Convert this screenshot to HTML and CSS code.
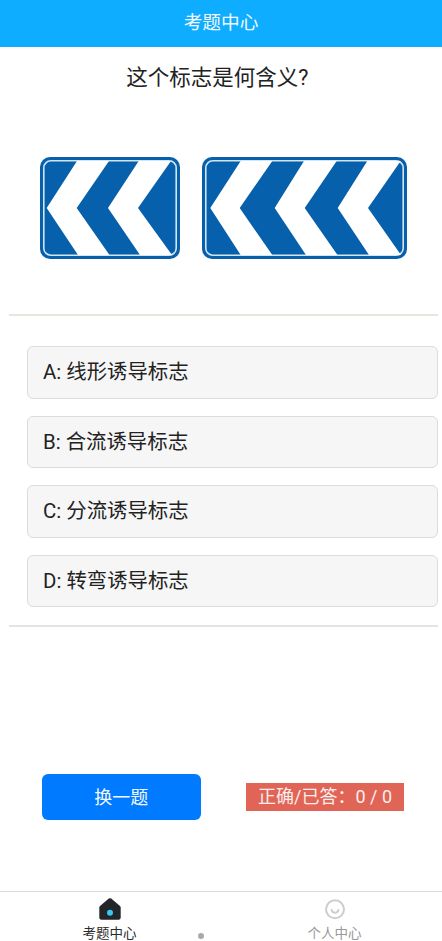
FILE: index.html
```html
<!DOCTYPE html>
<html lang="zh-CN">
  <head>
    <meta charset="UTF-8" />
    <meta name="viewport" content="width=device-width, initial-scale=1.0" />
    <title>考题中心</title>
    <link rel="stylesheet" href="styles.css">
  </head>
  <body>
    <header class="top-bar">考题中心</header>

    <main class="container">
      <!-- Question -->
      <h1 class="question">这个标志是何含义?</h1>
      <div class="signs">
        <svg class="sign" width="140" height="102" viewBox="0 0 140 102">
          <rect width="140" height="102" rx="10" fill="#0660ac" />
          <rect x="3.8" y="3.8" width="132.4" height="94.4" rx="7" fill="#0660ac" stroke="#d3e4f2" stroke-width="1.6" />
          <polygon fill="#fff" points="37,4 69,4 36.7,51 69.5,98 38,98 6.7,51" />
          <polygon fill="#fff" points="98.7,4 131,4 98,51 132,98 100,98 68,51" />
        </svg>
        <svg class="sign" width="205" height="102" viewBox="0 0 205 102">
          <rect width="205" height="102" rx="10" fill="#0660ac" />
          <rect x="3.8" y="3.8" width="197.4" height="94.4" rx="7" fill="#0660ac" stroke="#d3e4f2" stroke-width="1.6" />
          <polygon fill="#fff" points="38.7,4 70.3,4 37.7,51 70.3,98 38.7,98 8.3,51" />
          <polygon fill="#fff" points="102,4 134.7,4 102.7,51 135.5,98 104,98 72.7,51" />
          <polygon fill="#fff" points="165.3,4 198.7,4 166,51 199,98 167,98 135.7,51" />
        </svg>
      </div>

      <hr class="line line-warm" />

      <!-- Options -->
      <ul class="options">
        <li class="option">A: 线形诱导标志</li>
        <li class="option">B: 合流诱导标志</li>
        <li class="option">C: 分流诱导标志</li>
        <li class="option">D: 转弯诱导标志</li>
      </ul>

      <hr class="line" />

      <div class="actions">
        <button class="next-button">换一题</button>
        <div class="score">正确/已答：0 / 0</div>
      </div>
    </main>

    <footer class="tabs">
      <div class="tab tab-left">
        <svg width="24" height="24" viewBox="0 0 24 24">
          <path fill="#22252a" d="M10.8 1.6 Q12 0.7 13.2 1.6 L22 9 Q22.7 9.6 22.7 10.5 V20.5 Q22.7 22.7 20.5 22.7 H3.5 Q1.3 22.7 1.3 20.5 V10.5 Q1.3 9.6 2 9 Z" />
          <circle cx="12" cy="15.7" r="3" fill="#35c8f0" />
        </svg>
        <span>考题中心</span>
      </div>
      <div class="tab tab-right">
        <svg width="24" height="24" viewBox="0 0 24 24">
          <circle cx="12" cy="12.3" r="9" fill="none" stroke="#cdcdcd" stroke-width="2" />
          <path d="M8.6 13 A3.5 3.5 0 0 0 15.4 13" fill="none" stroke="#cdcdcd" stroke-width="2" stroke-linecap="round" />
        </svg>
        <span>个人中心</span>
      </div>
      <i class="dot"></i>
    </footer>
  </body>
</html>
```

FILE: styles.css
```css
* {
  box-sizing: border-box;
}
body {
  font-family: Roboto, "Noto Sans CJK SC", sans-serif;
  margin: 0;
  padding: 0;
  height: 941px;
  display: flex;
  flex-direction: column;
  background-color: #fff;
  overflow: hidden;
}
.top-bar {
  height: 47px;
  line-height: 46px;
  background: #0fadff;
  color: #f2f9ff;
  font-size: 18.7px;
  text-align: center;
  flex-shrink: 0;
}
.container {
  flex: 1;
  padding: 0 4.5px 0 9px;
}
.question {
  margin: 15px 0 0;
  padding-right: 12px;
  height: 31px;
  line-height: 31px;
  font-size: 21.5px;
  font-weight: 400;
  color: #222;
  text-align: center;
}
.signs {
  display: flex;
  gap: 21.5px;
  margin: 63.5px 0 0 31px;
}
.sign {
  display: block;
  flex-shrink: 0;
  filter: blur(0.4px);
}
.line {
  height: 2px;
  margin: 0;
  border: none;
  background: #e4e4e2;
}
.line-warm {
  margin-top: 55.5px;
  background: #e9e7dc;
}
.options {
  list-style: none;
  margin: 30px 0 0 18px;
  padding: 0;
  display: flex;
  flex-direction: column;
  gap: 17px;
}
.option {
  height: 52.5px;
  line-height: 50px;
  padding-left: 15px;
  background: #f6f6f6;
  border: 1px solid #dcdcdc;
  border-radius: 6px;
  font-size: 20.4px;
  color: #222;
}
.options + .line {
  margin-top: 18px;
}
.actions {
  display: flex;
  align-items: center;
  margin: 147px 0 0 33px;
}
.next-button {
  width: 158.5px;
  height: 46px;
  background: #007aff;
  color: #f4f9ff;
  border: none;
  border-radius: 6px;
  font-family: inherit;
  font-size: 18px;
  padding: 0 0 3px;
}
.score {
  width: 158px;
  height: 28px;
  line-height: 27px;
  margin-left: 45.5px;
  background: #e06557;
  color: #fbeeec;
  font-size: 18px;
  text-align: center;
}
.tabs {
  position: relative;
  height: 50px;
  flex-shrink: 0;
  display: flex;
  border-top: 1px solid #d9d9d9;
}
.tab {
  flex: 1;
  display: flex;
  flex-direction: column;
  align-items: center;
  padding-top: 5px;
  gap: 3px;
  font-size: 13.5px;
  line-height: 19px;
  color: #999;
}
.tab-left {
  padding-left: 2px;
  color: #2b2b2b;
}
.tab-right {
  padding-left: 10px;
}
.tab svg {
  display: block;
  flex-shrink: 0;
}
.tab span {
  flex-shrink: 0;
}
.dot {
  position: absolute;
  left: 198px;
  bottom: 2px;
  width: 6px;
  height: 6px;
  border-radius: 50%;
  background: #a9a9a9;
}
```
